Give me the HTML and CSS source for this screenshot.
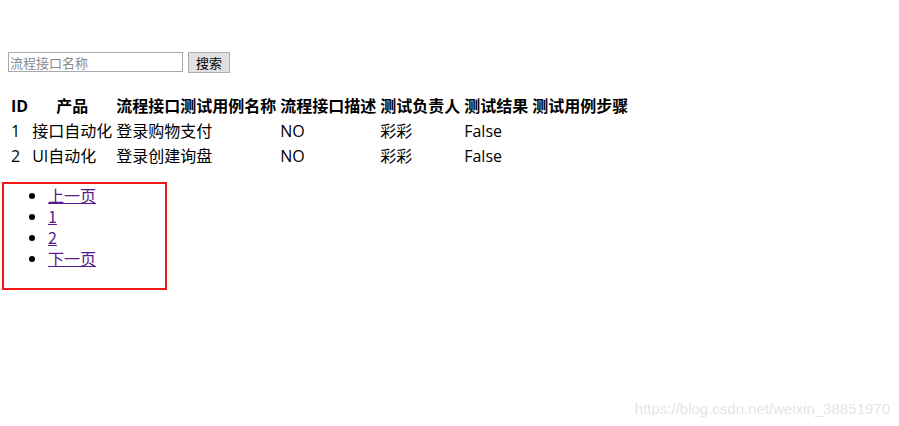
FILE: index.html
```html
<!DOCTYPE html>
<html>
<head>
<meta charset="utf-8">
<link rel="stylesheet" href="styles.css">
</head>
<body>
<div class="page">
<form class="search">
  <input class="search-input" type="text" placeholder="流程接口名称">
  <button class="search-btn" type="button">搜索</button>
</form>
<table class="cases">
  <thead>
    <tr><th>ID</th><th>产品</th><th>流程接口测试用例名称</th><th>流程接口描述</th><th>测试负责人</th><th>测试结果</th><th>测试用例步骤</th></tr>
  </thead>
  <tbody>
    <tr><td>1</td><td>接口自动化</td><td>登录购物支付</td><td>NO</td><td>彩彩</td><td>False</td><td></td></tr>
    <tr><td>2</td><td>UI自动化</td><td>登录创建询盘</td><td>NO</td><td>彩彩</td><td>False</td><td></td></tr>
  </tbody>
</table>
</div>
<div class="pager-box">
  <ul class="pager">
    <li><a href="#">上一页</a></li>
    <li><a href="#">1</a></li>
    <li><a href="#">2</a></li>
    <li><a href="#">下一页</a></li>
  </ul>
</div>
<div class="watermark">https://blog.csdn.net/weixin_38851970</div>
</body>
</html>
```
FILE: styles.css
```css
html, body { background: #fff; }
body {
  margin: 0;
  padding: 8px 0 0 2px;
  font-family: "Open Sans", "Noto Sans CJK SC", sans-serif;
  color: #000;
}
.page { padding-left: 6px; }
.search {
  margin: 44px 0 0 0;
  display: flex;
  align-items: center;
  gap: 5px;
  height: 20px;
}
.search-input {
  box-sizing: border-box;
  width: 175px;
  height: 20px;
  margin: 0;
  padding: 0 1px;
  border: 1px solid #a9a9a9;
  font-family: "Noto Sans CJK SC", sans-serif;
  font-size: 13px;
}
.search-input::placeholder { color: #8a8a8a; }
.search-btn {
  box-sizing: border-box;
  width: 42px;
  height: 21px;
  margin: 0;
  padding: 0;
  border: 1px solid #adadad;
  background: #e1e1e1;
  font-family: "Noto Sans CJK SC", sans-serif;
  font-size: 13px;
  line-height: 17px;
  color: #000;
}
.cases {
  margin-top: 21px;
  border-spacing: 2px;
  font-size: 16px;
  line-height: 21px;
}
.cases th, .cases td { padding: 1px; white-space: nowrap; }
.cases th { font-weight: bold; }
.cases td { text-align: left; }
.pager-box {
  margin-top: 12px;
  width: 161px;
  height: 104px;
  border: 2px solid #f21818;
}
.pager {
  margin: 0;
  padding: 1px 0 0 44px;
  font-family: "Noto Sans CJK SC", sans-serif;
  font-size: 16px;
  line-height: 21px;
}
.pager a { color: #551a8b; }
.watermark {
  position: fixed;
  right: 9px;
  bottom: 9px;
  font-family: "Liberation Sans", Arial, sans-serif;
  font-size: 15px;
  line-height: 17px;
  color: #e4e4e4;
}
```
